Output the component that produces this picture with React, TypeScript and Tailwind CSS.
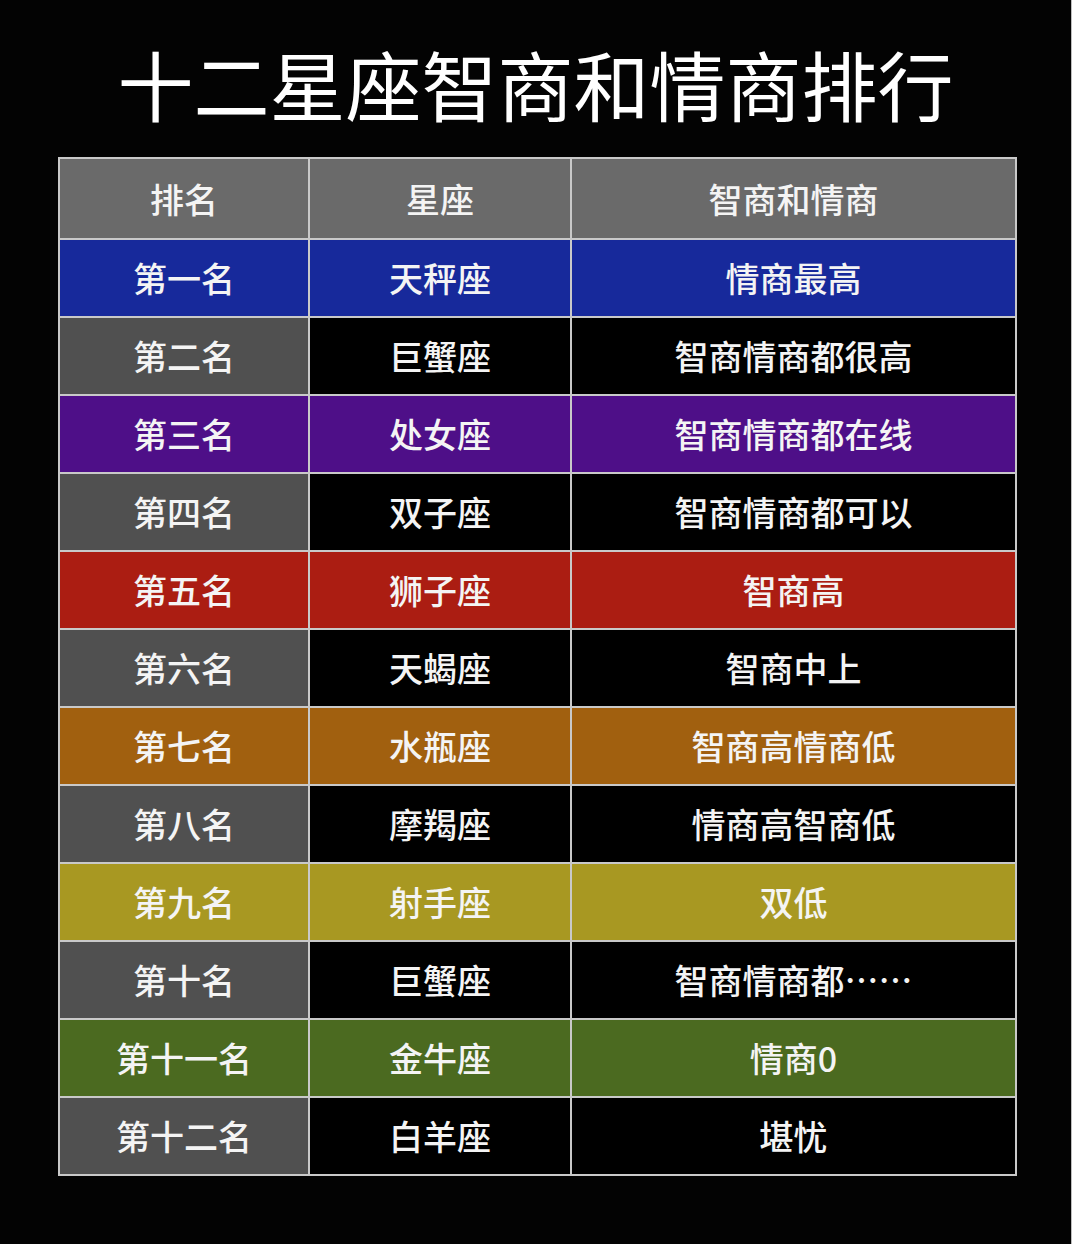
const rows = [
  { rank: "第一名", sign: "天秤座", desc: "情商最高", bg: "bg-[#17299b]", full: true },
  { rank: "第二名", sign: "巨蟹座", desc: "智商情商都很高", bg: "", full: false },
  { rank: "第三名", sign: "处女座", desc: "智商情商都在线", bg: "bg-[#4e0f88]", full: true },
  { rank: "第四名", sign: "双子座", desc: "智商情商都可以", bg: "", full: false },
  { rank: "第五名", sign: "狮子座", desc: "智商高", bg: "bg-[#ab1d12]", full: true },
  { rank: "第六名", sign: "天蝎座", desc: "智商中上", bg: "", full: false },
  { rank: "第七名", sign: "水瓶座", desc: "智商高情商低", bg: "bg-[#a1600f]", full: true },
  { rank: "第八名", sign: "摩羯座", desc: "情商高智商低", bg: "", full: false },
  { rank: "第九名", sign: "射手座", desc: "双低", bg: "bg-[#a89822]", full: true },
  { rank: "第十名", sign: "巨蟹座", desc: "智商情商都……", bg: "", full: false },
  { rank: "第十一名", sign: "金牛座", desc: "情商0", bg: "bg-[#4b6a20]", full: true },
  { rank: "第十二名", sign: "白羊座", desc: "堪忧", bg: "", full: false },
];

const font = "font-['Noto_Sans_CJK_SC',_sans-serif]";

function Cell({ text, bg, tall }: { text: string; bg: string; tall?: boolean }) {
  return (
    <div
      className={`${bg} ${tall ? "h-[79px]" : "h-[76px]"} flex items-center justify-center text-[34px] font-medium text-[#f4f4f4] leading-none`}
    >
      {text}
    </div>
  );
}

export default function App() {
  return (
    <div className={`w-[1080px] h-[1244px] flex ${font}`}>
      <div className="w-[1072px] h-full bg-[#030303] border-r border-[#bdbdbd] flex flex-col">
        <h1 className="mt-[45px] text-center text-[76px] leading-none font-normal text-white">
          十二星座智商和情商排行
        </h1>
        <div className="mt-[36px] ml-[58px] self-start p-[2px] bg-[#c9c9c9] grid grid-cols-[248px_260px_443px] gap-[2px]">
          <Cell text="排名" bg="bg-[#6a6a6a]" tall />
          <Cell text="星座" bg="bg-[#6a6a6a]" tall />
          <Cell text="智商和情商" bg="bg-[#6a6a6a]" tall />
          {rows.map((r) => (
            <div key={r.rank} className="contents">
              <Cell text={r.rank} bg={r.full ? r.bg : "bg-[#505050]"} />
              <Cell text={r.sign} bg={r.full ? r.bg : "bg-black"} />
              <Cell text={r.desc} bg={r.full ? r.bg : "bg-black"} />
            </div>
          ))}
        </div>
      </div>
      <div className="flex-1 bg-white" />
    </div>
  );
}
